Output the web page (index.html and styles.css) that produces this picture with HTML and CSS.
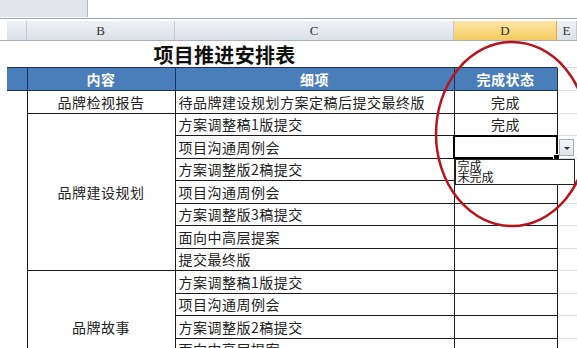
FILE: index.html
```html
<!DOCTYPE html>
<html lang="zh-CN">
<head>
    <meta charset="UTF-8">
    <title>项目推进安排表</title>
    <link rel="stylesheet" href="styles.css">
</head>
<body>
    <div class="topbar"><div class="namebox"></div></div>
    <div class="colheads">
        <div class="ch gut"></div>
        <div class="ch col-a"></div>
        <div class="ch col-b">B</div>
        <div class="ch col-c">C</div>
        <div class="ch col-d on">D</div>
        <div class="ch col-e">E</div>
    </div>
    <table class="grid">
        <colgroup>
            <col class="w-gut"><col class="w-a"><col class="w-b"><col class="w-c"><col class="w-d"><col class="w-e">
        </colgroup>
        <tr class="r-title">
            <td></td>
            <td class="title" colspan="3">项目推进安排表</td>
            <td></td>
            <td class="e"></td>
        </tr>
        <tr class="r-head">
            <td></td>
            <td class="hd"></td>
            <td class="hd">内容</td>
            <td class="hd">细项</td>
            <td class="hd">完成状态</td>
            <td class="e"></td>
        </tr>
        <tr>
            <td></td><td></td>
            <td class="cell mid">品牌检视报告</td>
            <td class="cell txt">待品牌建设规划方案定稿后提交最终版</td>
            <td class="cell mid">完成</td>
            <td class="e"></td>
        </tr>
        <tr>
            <td></td><td></td>
            <td class="cell mid" rowspan="7">品牌建设规划</td>
            <td class="cell txt">方案调整稿1版提交</td>
            <td class="cell mid">完成</td>
            <td class="e"></td>
        </tr>
        <tr>
            <td></td><td></td>
            <td class="cell txt">项目沟通周例会</td>
            <td class="cell sel">
                <div class="dd">
                    <div class="dd-btn"><span class="tri"></span></div>
                    <div class="dd-list">
                        <div>完成</div>
                        <div>未完成</div>
                    </div>
                </div>
            </td>
            <td class="e"></td>
        </tr>
        <tr>
            <td></td><td></td>
            <td class="cell txt">方案调整版2稿提交</td>
            <td class="cell"></td>
            <td class="e"></td>
        </tr>
        <tr>
            <td></td><td></td>
            <td class="cell txt">项目沟通周例会</td>
            <td class="cell"></td>
            <td class="e"></td>
        </tr>
        <tr>
            <td></td><td></td>
            <td class="cell txt">方案调整版3稿提交</td>
            <td class="cell"></td>
            <td class="e"></td>
        </tr>
        <tr>
            <td></td><td></td>
            <td class="cell txt">面向中高层提案</td>
            <td class="cell"></td>
            <td class="e"></td>
        </tr>
        <tr>
            <td></td><td></td>
            <td class="cell txt">提交最终版</td>
            <td class="cell"></td>
            <td class="e"></td>
        </tr>
        <tr>
            <td></td><td></td>
            <td class="cell mid" rowspan="5">品牌故事</td>
            <td class="cell txt">方案调整稿1版提交</td>
            <td class="cell"></td>
            <td class="e"></td>
        </tr>
        <tr>
            <td></td><td></td>
            <td class="cell txt">项目沟通周例会</td>
            <td class="cell"></td>
            <td class="e"></td>
        </tr>
        <tr>
            <td></td><td></td>
            <td class="cell txt">方案调整版2稿提交</td>
            <td class="cell"></td>
            <td class="e"></td>
        </tr>
        <tr>
            <td></td><td></td>
            <td class="cell txt">面向中高层提案</td>
            <td class="cell"></td>
            <td class="e"></td>
        </tr>
        <tr>
            <td></td><td></td>
            <td class="cell txt">提交最终版</td>
            <td class="cell"></td>
            <td class="e"></td>
        </tr>
    </table>

    <!-- hand drawn circle round the status column -->
    <svg class="mark" width="577" height="348" viewBox="0 0 577 348">
        <ellipse cx="512" cy="134" rx="76" ry="92" fill="none" stroke="#b8141c" stroke-width="2.5"/>
    </svg>
</body>
</html>
```

FILE: styles.css
```css
body {
    margin: 0;
    width: 577px;
    height: 348px;
    overflow: hidden;
    position: relative;
    background: #fff;
    font-family: "Noto Sans CJK SC", "Liberation Sans", sans-serif;
    color: #222;
}
.topbar {
    height: 18px;
    border-bottom: 1px solid #a2a9b3;
    margin-bottom: 2px;
}
.namebox {
    width: 87px;
    height: 17px;
    background: #e1e5eb;
    border-right: 1px solid #b4bac4;
}
.colheads {
    display: flex;
    height: 19px;
    border-bottom: 1px solid #a9b0ba;
    white-space: nowrap;
}
.ch {
    flex: none;
    box-sizing: border-box;
    border-right: 1px solid #c3c9d2;
    background: linear-gradient(#eef1f5, #dce1e8);
    font-family: "Liberation Serif", serif;
    font-size: 13px;
    line-height: 19px;
    text-align: center;
    color: #333;
}
.ch.gut { width: 7px; background: #fff; border-right: none; }
.ch.col-a { width: 20px; }
.ch.col-b { width: 148px; }
.ch.col-c { width: 279px; }
.ch.col-d { width: 103px; }
.ch.col-e { width: 20px; }
.ch.on {
    background: linear-gradient(#fbe7a6, #f5cc62);
    border-right-color: #d9ad4a;
}
.grid {
    border-collapse: collapse;
    table-layout: fixed;
    width: 597px;
}
.w-gut { width: 7px; }
.w-a { width: 20px; }
.w-b { width: 148px; }
.w-c { width: 279px; }
.w-d { width: 103px; }
.w-e { width: 40px; }
.grid td {
    padding: 0;
    font-size: 14px;
    line-height: 18px;
    letter-spacing: 0.5px;
    white-space: nowrap;
    overflow: visible;
}
.grid tr { height: 22.5px; }
.grid tr.r-title { height: 25px; }
.grid tr.r-head { height: 23px; }
.grid td.title {
    font-size: 20px;
    line-height: 24px;
    font-weight: bold;
    text-align: center;
    padding: 2px 12px 0 0;
    color: #111;
    letter-spacing: 0.3px;
}
.hd {
    background: #4a7ebb;
    color: #fff;
    font-weight: bold;
    text-align: center;
    border: 1px solid #1d3150;
}
.r-head td:nth-child(2) { border-left: none; }
.cell {
    border: 1px solid #1c1c1c;
}
.mid { text-align: center; }
.grid td.txt { padding-left: 3px; }
.e {
    border-bottom: 1px solid #d8dde4;
}
.sel {
    position: relative;
    outline: 2px solid #000;
    outline-offset: -1px;
}
.sel::after {
    content: "";
    position: absolute;
    right: -3px;
    bottom: -3px;
    width: 5px;
    height: 5px;
    background: #000;
    border: 1px solid #fff;
}
.dd {
    position: absolute;
    left: 0;
    top: 0;
    width: 100%;
    height: 100%;
}
.dd-btn {
    position: absolute;
    left: 104px;
    top: 3px;
    width: 15px;
    height: 17px;
    box-sizing: border-box;
    background: linear-gradient(#f4f6f9, #dfe3e9);
    border: 1px solid #a7aeb8;
    z-index: 2;
}
.tri {
    position: absolute;
    left: 4px;
    top: 7px;
    border-left: 3px solid transparent;
    border-right: 3px solid transparent;
    border-top: 3px solid #333;
}
.dd-list {
    position: absolute;
    left: 0;
    top: 23px;
    width: 120px;
    height: 26px;
    box-sizing: border-box;
    background: #fff;
    border: 1px solid #222;
    padding: 0 2px;
    font-size: 12px;
    line-height: 11px;
    letter-spacing: 0;
    color: #111;
    z-index: 3;
}
.mark {
    position: absolute;
    left: 0;
    top: 0;
    pointer-events: none;
    z-index: 5;
}
```
